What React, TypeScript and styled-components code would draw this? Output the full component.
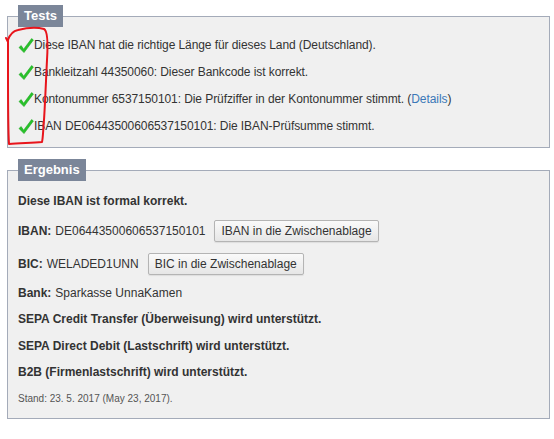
import React from "react";
import styled, {createGlobalStyle} from "styled-components";

const Global = createGlobalStyle`
  html, body {
    margin: 0;
    padding: 0;
    background: #ffffff;
  }
  body {
    font-family: "Liberation Sans", Arial, sans-serif;
    font-size: 12px;
    color: #333333;
  }
`;

const Page = styled.div`
  position: relative;
  padding: 5px 0 0 7px;
  width: 554px;
  box-sizing: border-box;
`;

const Box = styled.fieldset<{$gap?: number}>`
  margin: 0 0 11px 0;
  width: 543px;
  box-sizing: border-box;
  border: 1px solid #a4abb9;
  background: #f0f0f0;
  padding: ${(p) => (p.$gap ? "13px 10px 13px 10px" : "5px 10px 7px 10px")};
  display: flex;
  flex-direction: column;
  gap: ${(p) => p.$gap ?? 0}px;
`;

const Legend = styled.legend`
  background: #7b8699;
  color: #ffffff;
  font-weight: bold;
  font-size: 13px;
  line-height: 22px;
  padding: 0 6px;
  margin-left: 0;
`;

const Check = styled.span`
  display: inline-flex;
  width: 16px;
  height: 17px;
  align-items: center;
`;

const TestRow = styled.div`
  display: flex;
  align-items: center;
  height: 27px;
  line-height: 15px;
  letter-spacing: -0.08px;
`;

const Link = styled.a`
  color: #3b78b8;
  text-decoration: none;
`;

const Line = styled.div<{$bold?: boolean}>`
  line-height: 15px;
  font-weight: ${(p) => (p.$bold ? "bold" : "normal")};
`;

const FieldRow = styled.div`
  display: flex;
  align-items: center;
  height: 21px;
`;

const Label = styled.b`
  margin-right: 4px;
`;

const CopyButton = styled.button`
  margin-left: 9px;
  height: 22px;
  padding: 0 6px;
  font-family: "Liberation Sans", Arial, sans-serif;
  font-size: 12px;
  color: #333333;
  border: 1px solid #b4b4b4;
  border-radius: 2px;
  background: linear-gradient(#fafafa, #e6e6e6);
  box-shadow: 0 1px 1px rgba(0, 0, 0, 0.08);
`;

const Note = styled.div`
  font-size: 10px;
  line-height: 12px;
  color: #555555;
  margin-top: 1px;
`;

const Scribble = styled.svg`
  position: absolute;
  left: 0;
  top: 0;
  pointer-events: none;
`;

const Tick = () => (
  <Check>
    <svg width="16" height="17" viewBox="0 0 16 17">
      <path
        d="M1 10.5 L3.2 8.6 L5.6 12.2 L13.6 1.6 L15.4 3 L6 15.6 Z"
        fill="#27c22a"
        stroke="#1fa81f"
        strokeWidth="0.6"
        strokeLinejoin="round"
      />
    </svg>
  </Check>
);

const tests = [
  <>Diese IBAN hat die richtige Länge für dieses Land (Deutschland).</>,
  <>Bankleitzahl 44350060: Dieser Bankcode ist korrekt.</>,
  <>
    Kontonummer 6537150101: Die Prüfziffer in der Kontonummer stimmt. (<Link href="#">Details</Link>)
  </>,
  <>IBAN DE06443500606537150101: Die IBAN-Prüfsumme stimmt.</>,
];

export default function App() {
  return (
    <Page>
      <Global />
      <Box>
        <Legend>Tests</Legend>
        {tests.map((t, i) => (
          <TestRow key={i}>
            <Tick />
            <span>{t}</span>
          </TestRow>
        ))}
      </Box>
      <Box $gap={11.5}>
        <Legend>Ergebnis</Legend>
        <Line $bold>Diese IBAN ist formal korrekt.</Line>
        <FieldRow>
          <Label>IBAN:</Label>DE06443500606537150101
          <CopyButton>IBAN in die Zwischenablage</CopyButton>
        </FieldRow>
        <FieldRow>
          <Label>BIC:</Label>WELADED1UNN
          <CopyButton>BIC in die Zwischenablage</CopyButton>
        </FieldRow>
        <Line>
          <Label>Bank:</Label>Sparkasse UnnaKamen
        </Line>
        <Line $bold>SEPA Credit Transfer (Überweisung) wird unterstützt.</Line>
        <Line $bold>SEPA Direct Debit (Lastschrift) wird unterstützt.</Line>
        <Line $bold>B2B (Firmenlastschrift) wird unterstützt.</Line>
        <Note>Stand: 23. 5. 2017 (May 23, 2017).</Note>
      </Box>
      <Scribble width="60" height="150" viewBox="0 0 60 150">
        <path
          d="M6 38 L8 42 M8 40 C10 34 13 31 18 30 C26 28 36 27 44 29 C48 31 48 44 47 60 C46 80 45 105 44 120 C43 132 43 138 42 142 C32 143 20 143 9 144 C8 130 8 100 8 70 C8 55 8 45 8 40"
          fill="none"
          stroke="#e8151c"
          strokeWidth="2"
          strokeLinecap="round"
          strokeLinejoin="round"
        />
      </Scribble>
    </Page>
  );
}
